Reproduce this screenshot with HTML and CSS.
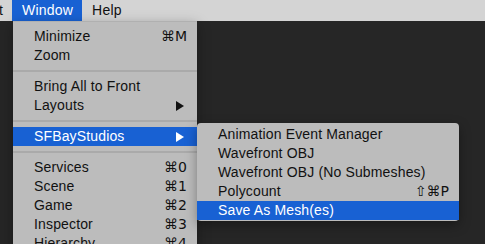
FILE: index.html
```html
<!DOCTYPE html>
<html lang="en">
<head>
    <meta charset="UTF-8">
    <title>Window menu</title>
    <link rel="stylesheet" href="styles.css">
</head>
<body>
    <div class="menubar">
        <span class="bar-item clipped">t</span>
        <span class="bar-item active">Window</span>
        <span class="bar-item">Help</span>
    </div>

    <div class="menu main-menu">
        <div class="item"><span>Minimize</span><span class="key">⌘M</span></div>
        <div class="item"><span>Zoom</span></div>
        <div class="sep"></div>
        <div class="item"><span>Bring All to Front</span></div>
        <div class="item has-sub"><span>Layouts</span><span class="arrow"></span></div>
        <div class="sep"></div>
        <div class="item has-sub selected"><span>SFBayStudios</span><span class="arrow"></span></div>
        <div class="sep"></div>
        <div class="item"><span>Services</span><span class="key">⌘0</span></div>
        <div class="item"><span>Scene</span><span class="key">⌘1</span></div>
        <div class="item"><span>Game</span><span class="key">⌘2</span></div>
        <div class="item"><span>Inspector</span><span class="key">⌘3</span></div>
        <div class="item"><span>Hierarchy</span><span class="key">⌘4</span></div>
    </div>

    <div class="menu sub-menu">
        <div class="item"><span>Animation Event Manager</span></div>
        <div class="item"><span>Wavefront OBJ</span></div>
        <div class="item"><span>Wavefront OBJ (No Submeshes)</span></div>
        <div class="item"><span>Polycount</span><span class="key">⇧⌘P</span></div>
        <div class="item selected"><span>Save As Mesh(es)</span></div>
    </div>
</body>
</html>
```

FILE: styles.css
```css
body {
    margin: 0;
    background-color: #262626;
    font-family: "Liberation Sans", Arial, sans-serif;
    font-size: 14px;
    color: #111;
    height: 244px;
    overflow: hidden;
}
.menubar {
    display: flex;
    height: 21px;
    background-color: #d4d4d4;
    line-height: 21px;
}
.bar-item {
    padding: 0 9px 0 10px;
    letter-spacing: 0.2px;
}
.bar-item.clipped {
    padding: 0 9px 0 0;
    margin-left: -1px;
}
.bar-item.active {
    background-color: #1861d3;
    color: #fff;
}
.menu {
    position: absolute;
    background-color: #bcbcbc;
    box-shadow: 0 4px 12px rgba(0, 0, 0, 0.35);
}
.main-menu {
    left: 13px;
    top: 21px;
    width: 184px;
    height: 240px;
    padding-top: 5px;
    border-top: 1px solid #b0b0b0;
    box-sizing: border-box;
}
.sub-menu {
    left: 197px;
    top: 123px;
    width: 262px;
    padding: 2px 0 1px;
    border-radius: 4px;
}
.item {
    display: flex;
    justify-content: space-between;
    align-items: center;
    height: 19px;
    line-height: 19px;
    padding: 0 10px 0 21px;
    letter-spacing: 0.15px;
}
.item.has-sub {
    padding-right: 13px;
}
.item.selected {
    background-color: #1861d3;
    color: #fff;
}
.key {
    font-family: "DejaVu Sans", "Liberation Sans", sans-serif;
    font-size: 14px;
    letter-spacing: 0;
}
.arrow {
    width: 0;
    height: 0;
    border-left: 8px solid #111;
    border-top: 5px solid transparent;
    border-bottom: 5px solid transparent;
}
.selected .arrow {
    border-left-color: #fff;
}
.sep {
    height: 2px;
    margin: 5px 0;
    background-color: #aaaaaa;
}
```
